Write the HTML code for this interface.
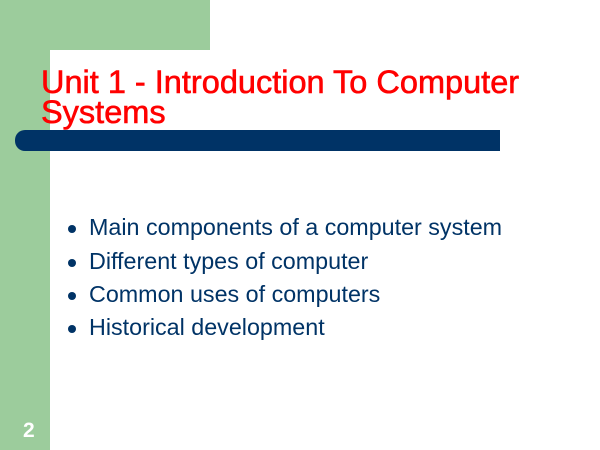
<!DOCTYPE html>
<html><head><style>
body{margin:0;width:600px;height:450px;position:relative;overflow:hidden;background:#fff;font-family:"Liberation Sans",Arial,sans-serif}
.g1{position:absolute;left:0;top:0;width:210px;height:50px;background:#9ccc9c}
.g2{position:absolute;left:0;top:0;width:50px;height:450px;background:#9ccc9c}
.wc{position:absolute;left:50px;top:50px;width:40px;height:40px;background:#fff;border-top-left-radius:13px}
.bar{position:absolute;left:15px;top:130px;width:485px;height:21px;background:#003366;border-radius:10px 0 0 10px}
.t{position:absolute;left:41px;top:66.5px;color:#ff0000;font-size:32.5px;line-height:30px;white-space:nowrap;-webkit-text-stroke:0.6px #ff0000}
.b{position:absolute;left:89px;color:#003366;font-size:23.3px;white-space:nowrap;line-height:26px}
.d{position:absolute;left:68px;width:8px;height:8px;border-radius:50%;background:#003366}
.n{position:absolute;left:23px;top:419px;color:#fff;font-size:21px;font-weight:bold;line-height:24px}
</style></head><body>
<div class="g1"></div><div class="g2"></div><div class="wc"></div>
<div class="t">Unit 1 - Introduction To Computer<br>Systems</div>
<div class="bar"></div>
<div class="d" style="top:225px"></div><div class="b" style="top:214px">Main components of a computer system</div>
<div class="d" style="top:259px"></div><div class="b" style="top:248px">Different types of computer</div>
<div class="d" style="top:292px"></div><div class="b" style="top:281px">Common uses of computers</div>
<div class="d" style="top:325px"></div><div class="b" style="top:314px">Historical development</div>
<div class="n">2</div>
</body></html>
